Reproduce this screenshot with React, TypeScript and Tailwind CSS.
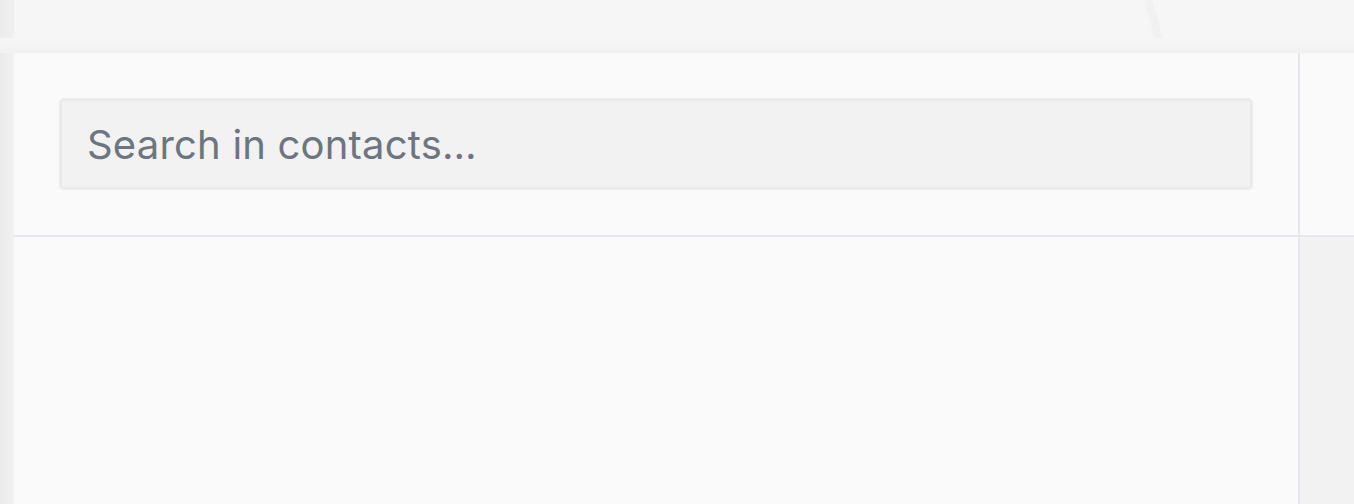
export default function App() {
  return (
    <div className="relative w-[1354px] h-[504px] overflow-hidden bg-[#f6f6f6] font-['Inter',sans-serif]">
      {/* faint background swirls */}
      <svg className="absolute inset-0 pointer-events-none" width="1354" height="504" viewBox="0 0 1354 504" fill="none">
        <path d="M1148 0 C1154 18 1158 36 1162 53" stroke="#f1f1f1" strokeWidth="8" />
        <path d="M1198 236 C1230 330 1262 420 1290 504" stroke="#f4f4f4" strokeWidth="10" />
        <path d="M44 236 C38 320 32 420 26 504" stroke="#f3f3f3" strokeWidth="12" />
      </svg>

      <div className="relative flex flex-col h-full pt-[53px] pl-[14px]">
        <div className="absolute left-0 top-0 w-[14px] h-full bg-gradient-to-r from-[#ebebeb] to-[#f1f1f1]" />
        <div className="absolute left-0 top-[38px] w-full h-[15px] bg-gradient-to-b from-[#f6f6f6] to-[#f1f1f1]" />

        <div className="relative flex flex-col flex-1 bg-[#fafafa]">
          <div className="flex h-[184px] border-b-2 border-[#e7e7ec]">
            <div className="w-[1284px] flex items-center px-[45px]">
              <div className="w-full h-[92px] flex items-center rounded-[5px] border-[3px] border-[#ebebeb] bg-[#f2f2f2] pl-[25px]">
                <span className="text-[40px] leading-none text-[#6c7580] tracking-[0.2px] pt-[2px]">Search in contacts…</span>
              </div>
            </div>
            <div className="flex-1 border-l-2 border-[#e7e7ec]" />
          </div>
          <div className="flex flex-1">
            <div className="w-[1284px]" />
            <div className="flex-1 border-l-2 border-[#e7e7ec] bg-[#f2f2f2]" />
          </div>
        </div>
      </div>
    </div>
  );
}
